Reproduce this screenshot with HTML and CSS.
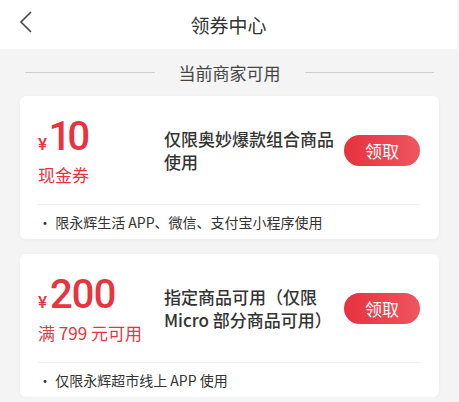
FILE: index.html
```html
<!DOCTYPE html>
<html lang="zh">
<head>
<meta charset="utf-8">
<link rel="stylesheet" href="styles.css">
</head>
<body>
<header class="topbar">
  <svg class="back" width="14" height="24" viewBox="0 0 14 24"><polyline points="12,2 2,12 12,22" fill="none" stroke="#444" stroke-width="1.6"/></svg>
  <h1 class="title">领券中心</h1>
</header>
<div class="section">
  <span class="line"></span>
  <span class="section-text">当前商家可用</span>
  <span class="line"></span>
</div>
<div class="list">
  <div class="card">
    <div class="card-main">
      <div class="value">
        <div class="amount"><span class="yen">¥</span><span class="num">10</span></div>
        <div class="cond">现金券</div>
      </div>
      <div class="desc">仅限奥妙爆款组合商品使用</div>
      <button class="btn">领取</button>
    </div>
    <div class="note">· 限永辉生活 APP、微信、支付宝小程序使用</div>
  </div>
  <div class="card">
    <div class="card-main">
      <div class="value">
        <div class="amount"><span class="yen">¥</span><span class="num">200</span></div>
        <div class="cond">满 799 元可用</div>
      </div>
      <div class="desc">指定商品可用（仅限Micro 部分商品可用）</div>
      <button class="btn">领取</button>
    </div>
    <div class="note">· 仅限永辉超市线上 APP 使用</div>
  </div>
</div>
</body>
</html>
```
FILE: styles.css
```css
* { box-sizing: border-box; }
body {
  margin: 0;
  background: #f4f4f4;
  font-family: "Noto Sans CJK SC", "Noto Sans", sans-serif;
  color: #333;
}
.topbar {
  height: 49px;
  background: #fff;
  margin-right: 2px;
  display: flex;
  align-items: center;
  justify-content: center;
  position: relative;
}
.back {
  position: absolute;
  left: 19px;
  top: 10px;
}
.title {
  margin: 0;
  font-size: 19px;
  font-weight: 400;
  color: #333;
}
.section {
  height: 47px;
  display: flex;
  align-items: center;
  padding: 0 25px;
}
.line {
  flex: 1;
  height: 1px;
  background: #cfcfcf;
}
.section-text {
  margin: 0 24px;
  font-size: 17px;
  color: #444;
}
.list {
  display: flex;
  flex-direction: column;
  gap: 15px;
  padding: 0 20px;
}
.card {
  background: #fff;
  border-radius: 6px;
  box-shadow: 0 1px 4px rgba(0,0,0,0.04);
  padding: 0 19px 0 18px;
}
.card-main {
  height: 109px;
  display: flex;
  align-items: center;
  border-bottom: 1px solid #f0f0f0;
}
.value {
  width: 126px;
  color: #e8343f;
  padding-top: 2px;
}
.amount {
  display: flex;
  align-items: baseline;
  line-height: 40px;
}
.yen {
  font-family: Roboto, sans-serif;
  font-size: 17px;
  font-weight: 500;
  margin-right: 3px;
}
.num {
  font-family: Roboto, sans-serif;
  font-size: 40px;
  font-weight: 500;
  letter-spacing: -1.5px;
  font-variant-numeric: proportional-nums;
}
.cond {
  font-size: 17px;
  line-height: 22px;
}
.desc {
  width: 178px;
  font-size: 17px;
  line-height: 23px;
  font-weight: 500;
  color: #333;
}
.btn {
  margin-left: auto;
  width: 76px;
  height: 31px;
  border: none;
  border-radius: 16px;
  background: linear-gradient(90deg, #e6323f, #ef5560);
  color: #fff;
  font-family: "Noto Sans CJK SC", sans-serif;
  font-size: 17px;
  padding: 0;
}
.note {
  height: 34px;
  display: flex;
  align-items: center;
  font-size: 14px;
  color: #333;
}
```
